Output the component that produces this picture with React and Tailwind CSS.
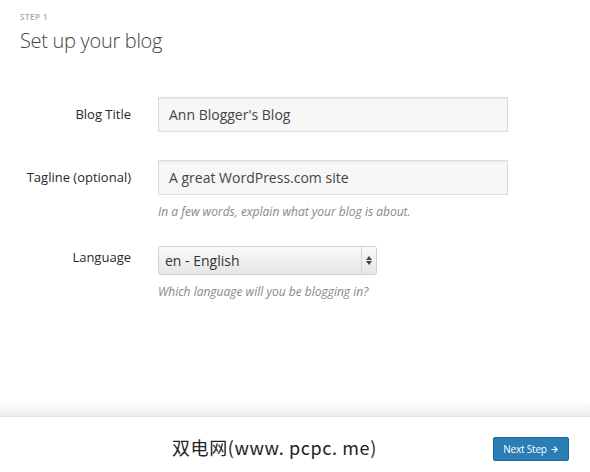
import { ArrowRight } from "lucide-react";

const font = { fontFamily: '"Open Sans", "Noto Sans", sans-serif' };

function Row({ label, children, hint, className = "", labelClass = "leading-[35px]" }) {
  return (
    <div className={`flex items-start ${className}`}>
      <div className={`w-[131px] shrink-0 text-right text-[13px] font-medium text-[#2a2a2a] ${labelClass}`}>{label}</div>
      <div className="ml-[27px]">
        {children}
        {hint && <p className="mt-[9px] text-[12px] italic text-[#888] leading-[16px]">{hint}</p>}
      </div>
    </div>
  );
}

export default function App() {
  return (
    <div className="w-[590px] h-[472px] bg-white flex flex-col overflow-hidden" style={font}>
      <div className="flex-1 bg-white">
        <div className="pl-[20px] pt-[11px]">
          <p className="text-[8px] tracking-[0.5px] text-[#aaa] font-semibold leading-[12px]">STEP 1</p>
          <h1 className="text-[20px] font-light text-[#444] leading-[26px] mt-[5px] tracking-[-0.3px]">Set up your blog</h1>
        </div>

        <div className="mt-[43px]">
          <Row label="Blog Title">
            <div className="w-[350px] h-[35px] border border-[#dcdcdc] bg-[#f7f7f7] px-[10px] flex items-center text-[14px] text-[#444] shadow-[inset_0_1px_2px_rgba(0,0,0,0.06)]">
              Ann Blogger's Blog
            </div>
          </Row>
          <Row label="Tagline (optional)" hint="In a few words, explain what your blog is about." className="mt-[28px]">
            <div className="w-[350px] h-[35px] border border-[#dcdcdc] bg-[#f7f7f7] px-[10px] flex items-center text-[14px] text-[#444] shadow-[inset_0_1px_2px_rgba(0,0,0,0.06)]">
              A great WordPress.com site
            </div>
          </Row>
          <Row label="Language" hint="Which language will you be blogging in?" className="mt-[26px]" labelClass="leading-[22px]">
            <div className="w-[219px] h-[29px] border border-[#d0d0d0] rounded-[3px] bg-gradient-to-b from-[#fafafa] to-[#e6e6e6] flex items-stretch text-[14px] text-[#333]">
              <div className="flex-1 flex items-center pl-[6px]">en - English</div>
              <div className="w-[15px] border-l border-[#d4d4d4] flex flex-col items-center justify-center gap-[1px]">
                <svg width="6" height="4" viewBox="0 0 6 4"><path d="M0 4 L3 0 L6 4Z" fill="#444" /></svg>
                <svg width="6" height="4" viewBox="0 0 6 4"><path d="M0 0 L3 4 L6 0Z" fill="#444" /></svg>
              </div>
            </div>
          </Row>
        </div>
      </div>

      <div className="h-[16px] bg-gradient-to-b from-white to-[#ececec] border-b border-[#e2e2e2]" />
      <div className="h-[55px] bg-white flex items-center relative">
        <span className="absolute left-[172px] top-[19px] text-[18px] text-[#222] leading-[22px] tracking-[0.6px]" style={{ fontFamily: '"Noto Sans CJK SC", "DejaVu Sans", sans-serif' }}>
          双电网(www. pcpc. me)
        </span>
        <button className="ml-auto mr-[21px] mt-[9px] w-[76px] h-[24px] rounded-[2px] bg-[#2a7db5] border border-[#1f6a9c] text-white text-[10px] flex items-center justify-center gap-[3px] tracking-[-0.2px]">
          Next Step <ArrowRight className="w-[9px] h-[9px]" strokeWidth={3} />
        </button>
      </div>
    </div>
  );
}
